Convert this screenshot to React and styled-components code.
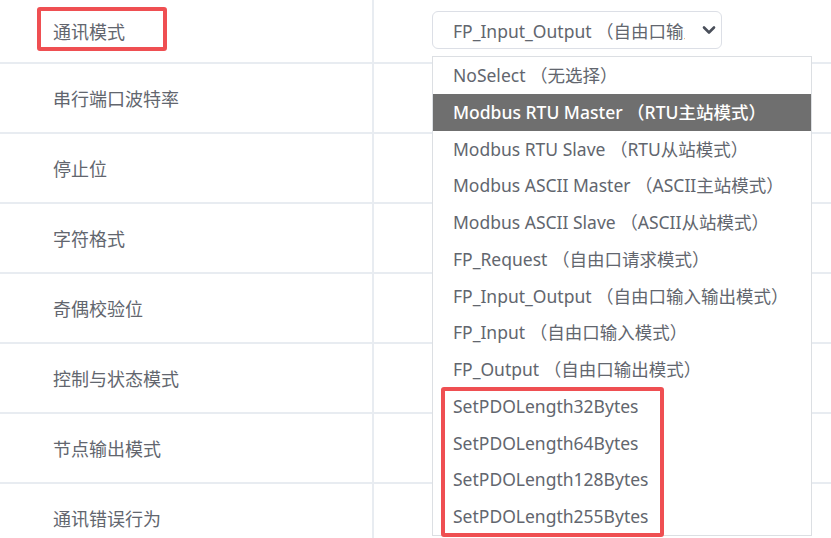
import React from 'react';
import styled, { createGlobalStyle } from 'styled-components';

const rows = [
	'通讯模式',
	'串行端口波特率',
	'停止位',
	'字符格式',
	'奇偶校验位',
	'控制与状态模式',
	'节点输出模式',
	'通讯错误行为',
];

const options = [
	'NoSelect （无选择）',
	'Modbus RTU Master （RTU主站模式）',
	'Modbus RTU Slave （RTU从站模式）',
	'Modbus ASCII Master （ASCII主站模式）',
	'Modbus ASCII Slave （ASCII从站模式）',
	'FP_Request （自由口请求模式）',
	'FP_Input_Output （自由口输入输出模式）',
	'FP_Input （自由口输入模式）',
	'FP_Output （自由口输出模式）',
	'SetPDOLength32Bytes',
	'SetPDOLength64Bytes',
	'SetPDOLength128Bytes',
	'SetPDOLength255Bytes',
];

const selectedIndex = 1;

const GlobalStyle = createGlobalStyle`
	html, body {
		margin: 0;
		padding: 0;
		background: #fff;
		overflow: hidden;
	}
	body {
		font-family: "Noto Sans", "Noto Sans CJK SC", sans-serif;
	}
`;

const Chevron = () => (
	<svg width='14' height='10' viewBox='0 0 14 10'>
		<polyline
			points='2,2.5 7,7.5 12,2.5'
			fill='none'
			stroke='#4a4f5a'
			strokeWidth='2.6'
			strokeLinecap='round'
			strokeLinejoin='round'
		/>
	</svg>
);

const App = () => (
	<>
		<GlobalStyle />
		<Table>
			{
				rows.map((label, i) => (
					<Row key={label} $first={i === 0}>
						<LabelCell>
							{i === 0 && <Mark />}
							<Label>{label}</Label>
						</LabelCell>
						<ValueCell>
							{i === 0 && (
								<SelectWrap>
									<Select>
										<SelectValue>FP_Input_Output （自由口输入输出模式）</SelectValue>
										<Chevron />
									</Select>
									<Menu>
										{
											options.map((opt, j) => (
												<Option key={opt} $active={j === selectedIndex}>
													{opt}
												</Option>
											))
										}
										<MenuMark />
									</Menu>
								</SelectWrap>
							)}
						</ValueCell>
					</Row>
				))
			}
		</Table>
	</>
);

const Table = styled.div`
	display: flex;
	flex-direction: column;
	width: 831px;
`;

const Row = styled.div`
	display: grid;
	grid-template-columns: 374px 1fr;
	height: ${(p) => (p.$first ? '64px' : '70px')};
	border-bottom: 2px solid #e8ecf1;
	box-sizing: border-box;
	flex-shrink: 0;
`;

const LabelCell = styled.div`
	position: relative;
	display: flex;
	align-items: center;
	padding-left: 53px;
	border-right: 2px solid #e8ecf1;
`;

const Label = styled.span`
	font-family: "Noto Sans CJK SC", sans-serif;
	font-size: 18px;
	color: #62666e;
`;

const Mark = styled.div`
	position: absolute;
	left: 37px;
	top: 7px;
	width: 130px;
	height: 44px;
	box-sizing: border-box;
	border: 4px solid #ef4f52;
	border-radius: 3px;
`;

const ValueCell = styled.div`
	position: relative;
	padding-left: 58px;
	padding-top: 11px;
`;

const SelectWrap = styled.div`
	position: relative;
	width: 290px;
	z-index: 2;
`;

const Select = styled.div`
	display: flex;
	align-items: center;
	height: 38px;
	box-sizing: border-box;
	border: 1px solid #dcdfe6;
	border-radius: 6px;
	padding: 0 5px 0 20px;
	background: #fff;
	color: #62666e;
	font-size: 17.5px;
	gap: 17px;
`;

const SelectValue = styled.span`
	flex: 1;
	white-space: nowrap;
	overflow: hidden;
	font-family: "Noto Sans", "Noto Sans CJK SC", sans-serif;
`;

const Menu = styled.div`
	position: absolute;
	top: 45px;
	left: 0;
	width: 380px;
	box-sizing: border-box;
	border: 1px solid #dcdfe3;
	background: #fff;
`;

const Option = styled.div`
	height: 36.75px;
	line-height: 36.75px;
	padding-left: 20px;
	white-space: nowrap;
	font-size: 17.5px;
	font-family: "Noto Sans", "Noto Sans CJK SC", sans-serif;
	color: ${(p) => (p.$active ? '#fff' : '#62666e')};
	background: ${(p) => (p.$active ? '#6f6f6f' : 'transparent')};
	font-weight: ${(p) => (p.$active ? 500 : 400)};
`;

const MenuMark = styled.div`
	position: absolute;
	left: 8px;
	top: 330px;
	width: 223px;
	height: 150px;
	box-sizing: border-box;
	border: 4px solid #ef4f52;
	border-radius: 3px;
`;

export default App;
